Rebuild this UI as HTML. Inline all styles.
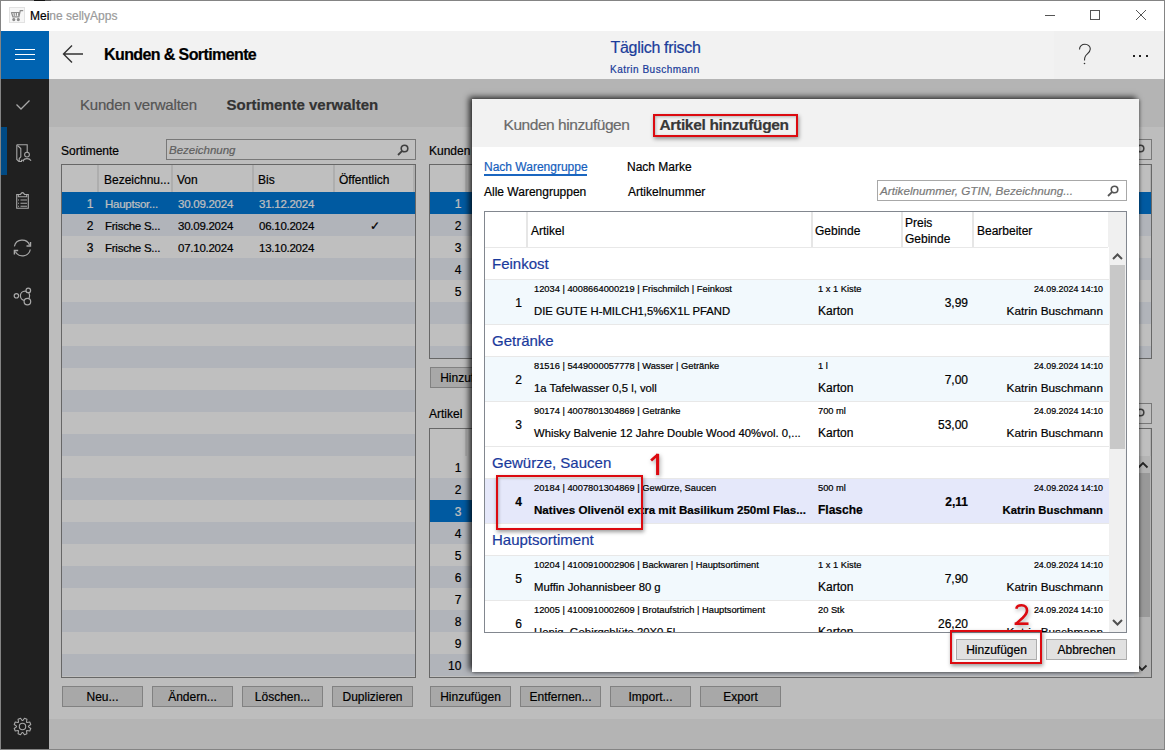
<!DOCTYPE html><html><head><meta charset="utf-8"><style>
*{margin:0;padding:0;box-sizing:border-box}
html,body{width:1165px;height:750px;overflow:hidden;background:#fff}
body{position:relative;font-family:"Liberation Sans",sans-serif;color:#000;-webkit-text-stroke:0.2px currentColor}
.a{position:absolute}
.t{position:absolute;line-height:0;white-space:nowrap}
.btn{position:absolute;background:#e1e1e1;border:1px solid #adadad;font-size:12px;text-align:center;line-height:20px;white-space:nowrap}
.grid{position:absolute;border:1px solid #8a8a8a;background:#fff;overflow:hidden}
.gh{position:absolute;left:0;right:0;top:0;height:27px;background:#fff}
.sep{position:absolute;top:0;width:2px;height:27px;background:#e8e8e8}
.row{position:absolute;left:0;right:0;height:22px}
.alt{background:#ecf0f8}
.sel{background:#0078d7;color:#fff}
.search{position:absolute;border:1px solid #a0a0a0;background:#fff}
</style></head><body>
<div class="a" style="left:0px;top:0px;width:1165px;height:750px;border:1px solid #848484;"></div>
<div class="a" style="left:34px;top:0px;width:11px;height:1px;background:#111;"></div>
<div class="a" style="left:45px;top:0px;width:6px;height:1px;background:#555;"></div>
<div class="a" style="left:9px;top:7px;width:16px;height:16px;background:#f6f6f6;border:1px solid #e2e2e2;"></div>
<svg class="a" style="left:0px;top:0px" width="30" height="30" fill="none" stroke="#8c8c8c" stroke-width="1.2"><path d="M11.4 12.2L12.9 16.8H18.9L20.3 10.6H23.2"/><path d="M13.9 12.2L14.4 15.8M16.4 12.2V15.8M18.9 12.2L18.5 15.8"/><path d="M11.4 12.5H19.8" stroke-width="1"/><circle cx="13.8" cy="19.6" r="1" fill="#8c8c8c"/><circle cx="18.3" cy="19.6" r="1" fill="#8c8c8c"/></svg>
<div class="t" style="left:30px;top:16px;font-size:12px;"><span style="color:#000">Mei</span><span style="color:#9a9a9a">ne sellyApps</span></div>
<div class="a" style="left:1045px;top:15px;width:10px;height:1px;background:#555;"></div>
<div class="a" style="left:1090px;top:10px;width:10px;height:10px;border:1px solid #555;"></div>
<svg class="a" style="left:1135px;top:9px" width="12" height="12"><path d="M1 1L11 11M11 1L1 11" stroke="#555" stroke-width="1"/></svg>
<div class="a" style="left:1px;top:31px;width:48px;height:48px;background:#0063b1;"></div>
<div class="a" style="left:15px;top:49px;width:20px;height:1px;background:#fff;"></div>
<div class="a" style="left:15px;top:54px;width:20px;height:1px;background:#fff;"></div>
<div class="a" style="left:15px;top:59px;width:20px;height:1px;background:#fff;"></div>
<div class="a" style="left:49px;top:31px;width:1115px;height:48px;background:#f2f2f2;"></div>
<div class="a" style="left:1054px;top:31px;width:110px;height:48px;background:#f0f0f0;"></div>
<svg class="a" style="left:62px;top:44px" width="24" height="20"><path d="M1.5 10H21M10 1.5L1.5 10L10 18.5" stroke="#333" stroke-width="1.4" fill="none"/></svg>
<div class="t" style="left:104px;top:54.5px;font-size:16px;font-weight:bold;letter-spacing:-0.6px">Kunden &amp; Sortimente</div>
<div class="t" style="left:610.5px;top:48px;font-size:16px;color:#1a3c9a;letter-spacing:-0.3px">Täglich frisch</div>
<div class="t" style="left:610px;top:69.5px;font-size:10px;color:#1a3c9a;letter-spacing:0.5px">Katrin Buschmann</div>
<svg class="a" style="left:1070px;top:40px" width="30" height="30"><path d="M9.5 9.5C9.5 6 12 4.3 15 4.3C18 4.3 20.3 6.5 20.3 9C20.3 12 17.5 13.5 15.5 16C14.8 17 14.5 18 14.5 20.5" stroke="#333" stroke-width="1.1" fill="none"/><circle cx="14.5" cy="23.5" r="0.8" fill="#333"/></svg>
<div class="a" style="left:1133px;top:55px;width:2px;height:2px;background:#222;"></div>
<div class="a" style="left:1139px;top:55px;width:2px;height:2px;background:#222;"></div>
<div class="a" style="left:1146px;top:55px;width:2px;height:2px;background:#222;"></div>
<div class="a" style="left:1px;top:79px;width:48px;height:670px;background:#2b2b2b;"></div>
<div class="a" style="left:1px;top:127px;width:6px;height:48px;background:#0063b1;"></div>
<svg class="a" style="left:15px;top:98px" width="16" height="14"><path d="M1.5 6.5L6 11L14.5 2.5" stroke="#e0e0e0" stroke-width="1.3" fill="none"/></svg>
<svg class="a" style="left:0px;top:130px" width="48" height="40" fill="none" stroke="#e0e0e0" stroke-width="1.1"><path d="M16.8 14.8H27.2V22.5"/><path d="M16.8 14.8V29.5L19 31.5"/><path d="M17.5 15.5L20.8 18.5V26.8L19.2 28.5V31.5H21.5V30.2H23.5V31.5"/><circle cx="27" cy="24.6" r="2.4"/><path d="M23.2 30.5C24.3 28.2 29.5 27.8 31 30.8"/></svg>
<svg class="a" style="left:0px;top:180px" width="48" height="40" fill="none" stroke="#e0e0e0" stroke-width="1.1"><path d="M20 14.5H16.7V28.3H28.3V14.5H25"/><path d="M18.3 14.5V16.8H26.7V14.5"/><path d="M19.8 14.6C21.2 14.6 21 12.6 22.5 12.6C24 12.6 23.8 14.6 25.2 14.6"/><path d="M20.5 20H27M20.5 23.2H27M20.5 26.3H27"/><path d="M18 20H19M18 23.2H19M18 26.3H19"/></svg>
<svg class="a" style="left:0px;top:230px" width="48" height="40" fill="none" stroke="#e0e0e0" stroke-width="1.2"><path d="M14.4 16.3A8 8 0 0 1 29.6 15.2"/><path d="M30.3 19.5A8 8 0 0 1 15.3 21.4"/><path d="M30.5 12V16H26.5" stroke-width="1.4"/><path d="M14.4 24.5V20.5H18.2" stroke-width="1.4"/></svg>
<svg class="a" style="left:0px;top:280px" width="48" height="40" fill="none" stroke="#e0e0e0" stroke-width="1.2"><circle cx="16.4" cy="15.8" r="2.2"/><circle cx="25" cy="15.8" r="4.6"/><circle cx="28.3" cy="10.4" r="2.3" fill="#2b2b2b"/><circle cx="27.4" cy="21.6" r="3.3" fill="#2b2b2b"/></svg>
<svg class="a" style="left:0px;top:690px" width="48" height="60" fill="none" stroke="#e0e0e0" stroke-width="1.1" stroke-linejoin="round"><path d="M22.87 30.51 L24.48 28.23 L26.94 29.25 L26.48 32.01 L26.99 32.52 L29.75 32.06 L30.77 34.52 L28.49 36.13 L28.49 36.87 L30.77 38.48 L29.75 40.94 L26.99 40.48 L26.48 40.99 L26.94 43.75 L24.48 44.77 L22.87 42.49 L22.13 42.49 L20.52 44.77 L18.06 43.75 L18.52 40.99 L18.01 40.48 L15.25 40.94 L14.23 38.48 L16.51 36.87 L16.51 36.13 L14.23 34.52 L15.25 32.06 L18.01 32.52 L18.52 32.01 L18.06 29.25 L20.52 28.23 L22.13 30.51Z"/><circle cx="22.5" cy="36.5" r="3.2"/></svg>
<div class="a" style="left:49px;top:79px;width:1115px;height:48px;background:#f0f0f0;"></div>
<div class="t" style="left:80px;top:104.5px;font-size:15px;color:#707070;letter-spacing:-0.2px">Kunden verwalten</div>
<div class="t" style="left:226.5px;top:104.5px;font-size:15px;color:#444;font-weight:bold;">Sortimente verwalten</div>
<div class="a" style="left:49px;top:127px;width:1115px;height:592px;background:#fcfcfc;"></div>
<div class="a" style="left:49px;top:719px;width:1115px;height:30px;background:#f0f0f0;"></div>
<div class="t" style="left:61px;top:150.5px;font-size:12px;">Sortimente</div>
<div class="search" style="left:166px;top:139px;width:250px;height:21px"></div>
<div class="t" style="left:169px;top:150px;font-size:11.5px;color:#808080;font-style:italic;">Bezeichnung</div>
<svg class="a" style="left:397px;top:144px" width="12" height="12"><circle cx="7.5" cy="4.5" r="3.3" stroke="#555" stroke-width="1.6" fill="none"/><path d="M5.2 6.8L1 11" stroke="#555" stroke-width="1.8"/></svg>
<div class="grid" style="left:61px;top:164px;width:355px;height:514px">
<div class="gh">
<div class="sep" style="left:35px"></div>
<div class="sep" style="left:109px"></div>
<div class="sep" style="left:190px"></div>
<div class="sep" style="left:271px"></div>
<div class="sep" style="left:351px"></div>
</div>
<div class="row sel" style="top:27px">
<div class="a" style="right:321.7px;top:1px;line-height:22px;font-size:12px">1</div>
<div class="a" style="left:43px;top:1px;line-height:22px;font-size:11.5px;letter-spacing:-0.25px;white-space:nowrap">Hauptsor...</div>
<div class="a" style="left:116px;top:1px;line-height:22px;font-size:11.5px;letter-spacing:-0.25px;white-space:nowrap">30.09.2024</div>
<div class="a" style="left:197px;top:1px;line-height:22px;font-size:11.5px;letter-spacing:-0.25px;white-space:nowrap">31.12.2024</div>
</div>
<div class="row alt" style="top:49px">
<div class="a" style="right:321.7px;top:1px;line-height:22px;font-size:12px">2</div>
<div class="a" style="left:43px;top:1px;line-height:22px;font-size:11.5px;letter-spacing:-0.25px;white-space:nowrap">Frische S...</div>
<div class="a" style="left:116px;top:1px;line-height:22px;font-size:11.5px;letter-spacing:-0.25px;white-space:nowrap">30.09.2024</div>
<div class="a" style="left:197px;top:1px;line-height:22px;font-size:11.5px;letter-spacing:-0.25px;white-space:nowrap">06.10.2024</div>
<div class="a" style="left:308px;top:1px;line-height:22px;font-size:11.5px;letter-spacing:-0.25px;white-space:nowrap">✓</div>
</div>
<div class="row" style="top:71px">
<div class="a" style="right:321.7px;top:1px;line-height:22px;font-size:12px">3</div>
<div class="a" style="left:43px;top:1px;line-height:22px;font-size:11.5px;letter-spacing:-0.25px;white-space:nowrap">Frische S...</div>
<div class="a" style="left:116px;top:1px;line-height:22px;font-size:11.5px;letter-spacing:-0.25px;white-space:nowrap">07.10.2024</div>
<div class="a" style="left:197px;top:1px;line-height:22px;font-size:11.5px;letter-spacing:-0.25px;white-space:nowrap">13.10.2024</div>
</div>
<div class="row alt" style="top:93px">
</div>
<div class="row" style="top:115px">
</div>
<div class="row alt" style="top:137px">
</div>
<div class="row" style="top:159px">
</div>
<div class="row alt" style="top:181px">
</div>
<div class="row" style="top:203px">
</div>
<div class="row alt" style="top:225px">
</div>
<div class="row" style="top:247px">
</div>
<div class="row alt" style="top:269px">
</div>
<div class="row" style="top:291px">
</div>
<div class="row alt" style="top:313px">
</div>
<div class="row" style="top:335px">
</div>
<div class="row alt" style="top:357px">
</div>
<div class="row" style="top:379px">
</div>
<div class="row alt" style="top:401px">
</div>
<div class="row" style="top:423px">
</div>
<div class="row alt" style="top:445px">
</div>
<div class="row" style="top:467px">
</div>
<div class="row alt" style="top:489px">
</div>
<div class="row" style="top:511px">
</div>
</div>
<div class="t" style="left:104px;top:180px;font-size:12px;">Bezeichnu...</div>
<div class="t" style="left:177px;top:180px;font-size:12px;">Von</div>
<div class="t" style="left:258px;top:180px;font-size:12px;">Bis</div>
<div class="t" style="left:339px;top:180px;font-size:12px;">Öffentlich</div>
<div class="btn" style="left:62px;top:686px;width:81px;height:21px;">Neu...</div>
<div class="btn" style="left:152px;top:686px;width:81px;height:21px;">Ändern...</div>
<div class="btn" style="left:242px;top:686px;width:81px;height:21px;">Löschen...</div>
<div class="btn" style="left:332px;top:686px;width:81px;height:21px;">Duplizieren</div>
<div class="t" style="left:429px;top:150.5px;font-size:12px;">Kunden</div>
<div class="search" style="left:534px;top:139px;width:618px;height:21px"></div>
<svg class="a" style="left:1133px;top:144px" width="12" height="12"><circle cx="7.5" cy="4.5" r="3.3" stroke="#555" stroke-width="1.6" fill="none"/><path d="M5.2 6.8L1 11" stroke="#555" stroke-width="1.8"/></svg>
<div class="grid" style="left:429px;top:164px;width:723px;height:195px">
<div class="gh">
<div class="sep" style="left:35px"></div>
<div class="sep" style="left:720px"></div>
</div>
<div class="row sel" style="top:27px">
<div class="a" style="right:689.7px;top:1px;line-height:22px;font-size:12px">1</div>
</div>
<div class="row alt" style="top:49px">
<div class="a" style="right:689.7px;top:1px;line-height:22px;font-size:12px">2</div>
</div>
<div class="row" style="top:71px">
<div class="a" style="right:689.7px;top:1px;line-height:22px;font-size:12px">3</div>
</div>
<div class="row alt" style="top:93px">
<div class="a" style="right:689.7px;top:1px;line-height:22px;font-size:12px">4</div>
</div>
<div class="row" style="top:115px">
<div class="a" style="right:689.7px;top:1px;line-height:22px;font-size:12px">5</div>
</div>
<div class="row alt" style="top:137px">
</div>
<div class="row" style="top:159px">
</div>
<div class="row alt" style="top:181px">
</div>
</div>
<div class="btn" style="left:430px;top:367px;width:81px;height:21px;">Hinzufügen</div>
<div class="t" style="left:429px;top:414px;font-size:12px;">Artikel</div>
<div class="search" style="left:534px;top:403px;width:618px;height:21px"></div>
<svg class="a" style="left:1133px;top:408px" width="12" height="12"><circle cx="7.5" cy="4.5" r="3.3" stroke="#555" stroke-width="1.6" fill="none"/><path d="M5.2 6.8L1 11" stroke="#555" stroke-width="1.8"/></svg>
<div class="grid" style="left:429px;top:428px;width:723px;height:250px">
<div class="gh">
<div class="sep" style="left:35px"></div>
<div class="sep" style="left:720px"></div>
</div>
<div class="row" style="top:27px">
<div class="a" style="right:689.7px;top:1px;line-height:22px;font-size:12px">1</div>
</div>
<div class="row alt" style="top:49px">
<div class="a" style="right:689.7px;top:1px;line-height:22px;font-size:12px">2</div>
</div>
<div class="row sel" style="top:71px">
<div class="a" style="right:689.7px;top:1px;line-height:22px;font-size:12px">3</div>
</div>
<div class="row alt" style="top:93px">
<div class="a" style="right:689.7px;top:1px;line-height:22px;font-size:12px">4</div>
</div>
<div class="row" style="top:115px">
<div class="a" style="right:689.7px;top:1px;line-height:22px;font-size:12px">5</div>
</div>
<div class="row alt" style="top:137px">
<div class="a" style="right:689.7px;top:1px;line-height:22px;font-size:12px">6</div>
</div>
<div class="row" style="top:159px">
<div class="a" style="right:689.7px;top:1px;line-height:22px;font-size:12px">7</div>
</div>
<div class="row alt" style="top:181px">
<div class="a" style="right:689.7px;top:1px;line-height:22px;font-size:12px">8</div>
</div>
<div class="row" style="top:203px">
<div class="a" style="right:689.7px;top:1px;line-height:22px;font-size:12px">9</div>
</div>
<div class="row alt" style="top:225px">
<div class="a" style="right:689.7px;top:1px;line-height:22px;font-size:12px">10</div>
</div>
<div class="row" style="top:247px">
</div>
</div>
<div class="a" style="left:1134px;top:456px;width:17px;height:221px;background:#f0f0f0;"></div>
<div class="a" style="left:1135px;top:473px;width:15px;height:144px;background:#cdcdcd;"></div>
<svg class="a" style="left:1137px;top:461px" width="12" height="8"><path d="M1.5 6.5L6 2L10.5 6.5" stroke="#333" stroke-width="1.8" fill="none"/></svg>
<svg class="a" style="left:1136px;top:664px" width="12" height="8"><path d="M1.5 1.5L6 6L10.5 1.5" stroke="#333" stroke-width="1.8" fill="none"/></svg>
<div class="btn" style="left:430px;top:686px;width:81px;height:21px;">Hinzufügen</div>
<div class="btn" style="left:520px;top:686px;width:81px;height:21px;">Entfernen...</div>
<div class="btn" style="left:610px;top:686px;width:81px;height:21px;">Import...</div>
<div class="btn" style="left:700px;top:686px;width:81px;height:21px;">Export</div>
<div class="a" style="left:1px;top:79px;width:1163px;height:670px;background:rgba(0,0,0,0.25);"></div>
<div class="a" style="left:472px;top:99px;width:667px;height:573px;background:#fff;box-shadow:-3px -2px 6px 0px rgba(0,0,0,0.75),1px 1px 3px rgba(0,0,0,0.35)"></div>
<div class="a" style="left:472px;top:99px;width:667px;height:48px;background:#f2f2f2;"></div>
<div class="t" style="left:503.5px;top:124.6px;font-size:15.5px;color:#6a6a6a;letter-spacing:-0.45px">Kunden hinzufügen</div>
<div class="t" style="left:659.5px;top:124.6px;font-size:15.5px;color:#383838;font-weight:bold;letter-spacing:-0.33px">Artikel hinzufügen</div>
<div class="a" style="left:653px;top:114px;width:145px;height:23px;border:2px solid #dc0a10;box-shadow:1px 2px 4px rgba(0,0,0,0.4),inset 1px 1px 3px rgba(0,0,0,0.25)"></div>
<div class="t" style="left:484px;top:167px;font-size:12px;color:#1560bd;">Nach Warengruppe</div>
<div class="a" style="left:484px;top:174px;width:103px;height:2px;background:#1a66c0;"></div>
<div class="t" style="left:627px;top:167px;font-size:12px;">Nach Marke</div>
<div class="t" style="left:484px;top:192px;font-size:12px;">Alle Warengruppen</div>
<div class="t" style="left:628px;top:192px;font-size:12px;">Artikelnummer</div>
<div class="search" style="left:877px;top:180px;width:250px;height:21px;border-color:#a8a8a8"></div>
<div class="t" style="left:880px;top:190.5px;font-size:11.7px;color:#7a7a7a;font-style:italic;">Artikelnummer, GTIN, Bezeichnung...</div>
<svg class="a" style="left:1107px;top:185px" width="12" height="12"><circle cx="7.5" cy="4.5" r="3.3" stroke="#555" stroke-width="1.6" fill="none"/><path d="M5.2 6.8L1 11" stroke="#555" stroke-width="1.8"/></svg>
<div class="a" style="left:484px;top:211px;width:643px;height:422px;border:1px solid #82878f;background:#fff;overflow:hidden">
<div class="a" style="left:0;top:0;width:623px;height:36px;background:#fff;border-bottom:1px solid #e8e8e8"></div>
<div class="a" style="left:623px;top:0;width:18px;height:35px;background:#f0f0f0"></div>
<div class="a" style="left:41px;top:0;width:2px;height:35px;background:#e6e6e6"></div>
<div class="a" style="left:326px;top:0;width:2px;height:35px;background:#e6e6e6"></div>
<div class="a" style="left:416px;top:0;width:2px;height:35px;background:#e6e6e6"></div>
<div class="a" style="left:487px;top:0;width:2px;height:35px;background:#e6e6e6"></div>
</div>
<div class="t" style="left:531px;top:231px;font-size:12px;">Artikel</div>
<div class="t" style="left:815px;top:231px;font-size:12px;">Gebinde</div>
<div class="t" style="left:905px;top:223px;font-size:12px;">Preis</div>
<div class="t" style="left:905px;top:239px;font-size:12px;">Gebinde</div>
<div class="t" style="left:977px;top:231px;font-size:12px;">Bearbeiter</div>
<div class="a" style="left:485px;top:247px;width:624px;height:385px;overflow:hidden">
<div class="a" style="left:-485px;top:-247px;width:1165px;height:750px">
<div class="t" style="left:492px;top:264.3px;font-size:15px;color:#1a3a9c;">Feinkost</div>
<div class="a" style="left:485px;top:279px;width:624px;height:1px;background:#e8e8e8;"></div>
<div class="a" style="left:485px;top:280px;width:624px;height:45px;background:#f2f9fd;border-bottom:1px solid #e8e8e8"></div>
<div class="t" style="right:643px;top:303px;font-size:12px;">1</div>
<div class="t" style="left:534px;top:288.5px;font-size:9.3px;">12034 | 4008664000219 | Frischmilch | Feinkost</div>
<div class="t" style="left:534px;top:310.5px;font-size:11.3px;">DIE GUTE H-MILCH1,5%6X1L PFAND</div>
<div class="t" style="left:818px;top:288.5px;font-size:9.3px;">1 x 1 Kiste</div>
<div class="t" style="left:818px;top:310.5px;font-size:12px;">Karton</div>
<div class="t" style="right:197px;top:302.5px;font-size:12px;">3,99</div>
<div class="t" style="right:62px;top:288.5px;font-size:8.9px;">24.09.2024 14:10</div>
<div class="t" style="right:62px;top:310.5px;font-size:11.8px;">Katrin Buschmann</div>
<div class="t" style="left:492px;top:341.3px;font-size:15px;color:#1a3a9c;">Getränke</div>
<div class="a" style="left:485px;top:356px;width:624px;height:1px;background:#e8e8e8;"></div>
<div class="a" style="left:485px;top:357px;width:624px;height:45px;background:#f2f9fd;border-bottom:1px solid #e8e8e8"></div>
<div class="t" style="right:643px;top:380px;font-size:12px;">2</div>
<div class="t" style="left:534px;top:365.5px;font-size:9.3px;">81516 | 5449000057778 | Wasser | Getränke</div>
<div class="t" style="left:534px;top:387.5px;font-size:11.3px;">1a Tafelwasser 0,5 l, voll</div>
<div class="t" style="left:818px;top:365.5px;font-size:9.3px;">1 l</div>
<div class="t" style="left:818px;top:387.5px;font-size:12px;">Karton</div>
<div class="t" style="right:197px;top:379.5px;font-size:12px;">7,00</div>
<div class="t" style="right:62px;top:365.5px;font-size:8.9px;">24.09.2024 14:10</div>
<div class="t" style="right:62px;top:387.5px;font-size:11.8px;">Katrin Buschmann</div>
<div class="a" style="left:485px;top:401px;width:624px;height:1px;background:#e8e8e8;"></div>
<div class="a" style="left:485px;top:402px;width:624px;height:45px;background:#fff;border-bottom:1px solid #e8e8e8"></div>
<div class="t" style="right:643px;top:425px;font-size:12px;">3</div>
<div class="t" style="left:534px;top:410.5px;font-size:9.3px;">90174 | 4007801304869 | Getränke</div>
<div class="t" style="left:534px;top:432.5px;font-size:11.3px;">Whisky Balvenie 12 Jahre Double Wood 40%vol. 0,...</div>
<div class="t" style="left:818px;top:410.5px;font-size:9.3px;">700 ml</div>
<div class="t" style="left:818px;top:432.5px;font-size:12px;">Karton</div>
<div class="t" style="right:197px;top:424.5px;font-size:12px;">53,00</div>
<div class="t" style="right:62px;top:410.5px;font-size:8.9px;">24.09.2024 14:10</div>
<div class="t" style="right:62px;top:432.5px;font-size:11.8px;">Katrin Buschmann</div>
<div class="t" style="left:492px;top:463.3px;font-size:15px;color:#1a3a9c;">Gewürze, Saucen</div>
<div class="a" style="left:485px;top:478px;width:624px;height:1px;background:#e8e8e8;"></div>
<div class="a" style="left:485px;top:479px;width:624px;height:45px;background:#e5e8fa;border-bottom:1px solid #e8e8e8"></div>
<div class="t" style="right:643px;top:502px;font-size:12px;font-weight:bold;">4</div>
<div class="t" style="left:534px;top:487.5px;font-size:9.3px;">20184 | 4007801304869 | Gewürze, Saucen</div>
<div class="t" style="left:534px;top:509.5px;font-size:11.6px;font-weight:bold;">Natives Olivenöl extra mit Basilikum 250ml Flas...</div>
<div class="t" style="left:818px;top:487.5px;font-size:9.3px;">500 ml</div>
<div class="t" style="left:818px;top:509.5px;font-size:12px;font-weight:bold;">Flasche</div>
<div class="t" style="right:197px;top:501.5px;font-size:12px;font-weight:bold;">2,11</div>
<div class="t" style="right:62px;top:487.5px;font-size:8.9px;">24.09.2024 14:10</div>
<div class="t" style="right:62px;top:509.5px;font-size:11.3px;font-weight:bold;">Katrin Buschmann</div>
<div class="t" style="left:492px;top:540.3px;font-size:15px;color:#1a3a9c;">Hauptsortiment</div>
<div class="a" style="left:485px;top:555px;width:624px;height:1px;background:#e8e8e8;"></div>
<div class="a" style="left:485px;top:556px;width:624px;height:45px;background:#f2f9fd;border-bottom:1px solid #e8e8e8"></div>
<div class="t" style="right:643px;top:579px;font-size:12px;">5</div>
<div class="t" style="left:534px;top:564.5px;font-size:9.3px;">10204 | 4100910002906 | Backwaren | Hauptsortiment</div>
<div class="t" style="left:534px;top:586.5px;font-size:11.3px;">Muffin Johannisbeer 80 g</div>
<div class="t" style="left:818px;top:564.5px;font-size:9.3px;">1 x 1 Kiste</div>
<div class="t" style="left:818px;top:586.5px;font-size:12px;">Karton</div>
<div class="t" style="right:197px;top:578.5px;font-size:12px;">7,90</div>
<div class="t" style="right:62px;top:564.5px;font-size:8.9px;">24.09.2024 14:10</div>
<div class="t" style="right:62px;top:586.5px;font-size:11.8px;">Katrin Buschmann</div>
<div class="a" style="left:485px;top:600px;width:624px;height:1px;background:#e8e8e8;"></div>
<div class="a" style="left:485px;top:601px;width:624px;height:45px;background:#fff;border-bottom:1px solid #e8e8e8"></div>
<div class="t" style="right:643px;top:624px;font-size:12px;">6</div>
<div class="t" style="left:534px;top:609.5px;font-size:9.3px;">12005 | 4100910002609 | Brotaufstrich | Hauptsortiment</div>
<div class="t" style="left:534px;top:631.5px;font-size:11.3px;">Honig, Gebirgsblüte 20X0,5l</div>
<div class="t" style="left:818px;top:609.5px;font-size:9.3px;">20 Stk</div>
<div class="t" style="left:818px;top:631.5px;font-size:12px;">Karton</div>
<div class="t" style="right:197px;top:623.5px;font-size:12px;">26,20</div>
<div class="t" style="right:62px;top:609.5px;font-size:8.9px;">24.09.2024 14:10</div>
<div class="t" style="right:62px;top:631.5px;font-size:11.8px;">Katrin Buschmann</div>
</div></div>
<div class="a" style="left:1109px;top:247px;width:17px;height:385px;background:#f0f0f0;"></div>
<div class="a" style="left:1110px;top:265px;width:15px;height:184px;background:#c8c8c8;"></div>
<svg class="a" style="left:1112px;top:253px" width="11" height="7"><path d="M1 6L5.5 1.5L10 6" stroke="#505050" stroke-width="2" fill="none"/></svg>
<svg class="a" style="left:1112px;top:619px" width="11" height="7"><path d="M1 1L5.5 5.5L10 1" stroke="#505050" stroke-width="2" fill="none"/></svg>
<div class="btn" style="left:956px;top:639px;width:81px;height:21px;">Hinzufügen</div>
<div class="btn" style="left:1046px;top:639px;width:81px;height:21px;">Abbrechen</div>
<div class="a" style="left:950px;top:630px;width:92px;height:34px;border:2px solid #dc0a10;box-shadow:1px 2px 4px rgba(0,0,0,0.4),inset 1px 1px 3px rgba(0,0,0,0.25)"></div>
<div class="a" style="left:496px;top:475px;width:147px;height:55px;border:2px solid #dc0a10;box-shadow:1px 2px 4px rgba(0,0,0,0.4),inset 1px 1px 3px rgba(0,0,0,0.25)"></div>
<svg class="a" style="left:640px;top:445px;overflow:visible;filter:drop-shadow(1px 2px 2px rgba(0,0,0,0.35))" width="30" height="40" fill="none" stroke="#dc0a10"><path d="M17.6 8.8V30.1" stroke-width="3.1"/><path d="M17.9 9.6L11.1 15.6" stroke-width="2.7"/></svg>
<svg class="a" style="left:1005px;top:595px;overflow:visible;filter:drop-shadow(1px 2px 2px rgba(0,0,0,0.35))" width="30" height="40" fill="none" stroke="#dc0a10" stroke-width="2.6"><path d="M11.3 13.7C11.8 11 14 10.3 16.6 10.3C19.8 10.3 22 12.3 22 15.5C22 18.3 20.3 20.3 17.8 22.7L11.2 28.6"/><path d="M9.6 28.7H23.5"/></svg>
</body></html>
